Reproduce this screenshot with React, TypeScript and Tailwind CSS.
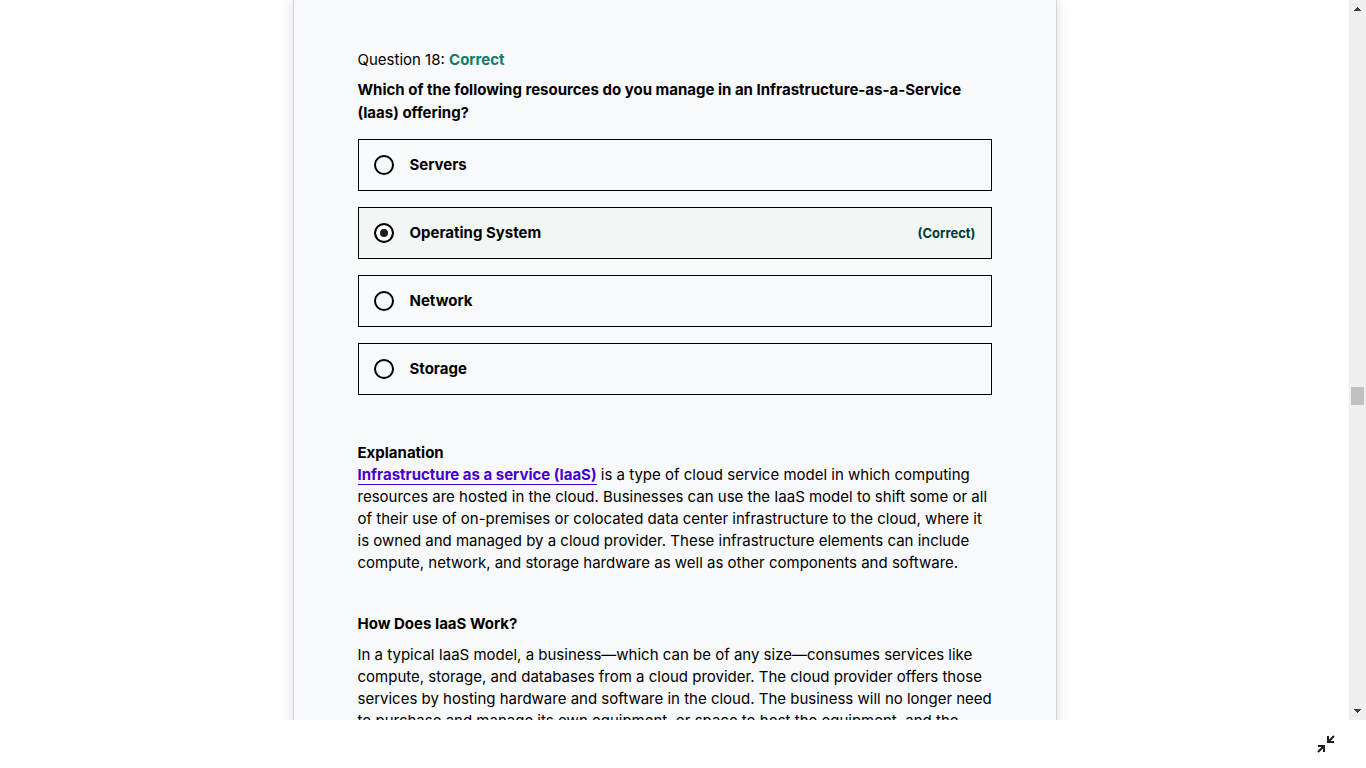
const options = [
  { id: "servers", label: "Servers", correct: false },
  { id: "operating-system", label: "Operating System", correct: true },
  { id: "network", label: "Network", correct: false },
  { id: "storage", label: "Storage", correct: false },
];

function AnswerOption({ id, label, correct }: { id: string; label: string; correct: boolean }) {
  return (
    <label
      htmlFor={id}
      className={`flex items-center gap-4 border border-black px-[15px] py-[13px] leading-6 font-bold ${
        correct ? "bg-[#f2f6f5]" : ""
      }`}
    >
      <input
        id={id}
        type="radio"
        name="answer"
        defaultChecked={correct}
        className="size-5 shrink-0 appearance-none rounded-full border-2 border-black checked:bg-[#1c1d1f] checked:shadow-[inset_0_0_0_4px_#ffffff]"
      />
      <span className="flex-1">{label}</span>
      {correct && <span className="text-[13px] text-[#003c32]">(Correct)</span>}
    </label>
  );
}

function Scrollbar() {
  return (
    <div aria-hidden="true" className="flex w-[17px] shrink-0 flex-col items-center justify-between bg-[#f0f0f0] py-[7px]">
      <svg width="7" height="4" viewBox="0 0 7 4" shapeRendering="crispEdges" fill="#404040">
        <path d="M3 0h1v1h1v1h1v1h1v1H0V3h1V2h1V1h1z" />
      </svg>
      <div className="mt-[72px] h-[18px] w-[13px] bg-[#c1c1c1]" />
      <svg width="7" height="4" viewBox="0 0 7 4" shapeRendering="crispEdges" fill="#404040">
        <path d="M0 0h7v1H6v1H5v1H4v1H3V3H2V2H1V1H0z" />
      </svg>
    </div>
  );
}

export default function App() {
  return (
    <div className="flex h-screen flex-col bg-white font-['Inter','Liberation_Sans',sans-serif] text-[15px] text-black">
      <div className="flex min-h-0 flex-1">
        <main className="flex flex-1 justify-center overflow-hidden">
          <article className="h-max w-full max-w-[764px] border-x border-[#d1d7dc] bg-[#f8f9fb] px-16 pt-12 pb-16 shadow-[0_0_12px_rgba(0,0,0,0.14)]">
            <p className="leading-6">
              Question 18: <span className="font-bold text-[#0f7c6a]">Correct</span>
            </p>
            <h1 className="mt-1.5 leading-[23px] font-bold">
              Which of the following resources do you manage in an Infrastructure-as-a-Service (Iaas) offering?
            </h1>
            <fieldset aria-label="Answers" className="mt-[15px] flex flex-col gap-4">
              {options.map((option) => (
                <AnswerOption key={option.id} {...option} />
              ))}
            </fieldset>

            <h2 className="mt-[47px] leading-[22px] font-bold">Explanation</h2>
            <p className="leading-[22px]">
              <a href="#iaas" className="border-b border-[#4700cc] font-bold text-[#4700cc]">
                Infrastructure as a service (IaaS)
              </a>{" "}
              is a type of cloud service model in which computing resources are hosted in the cloud. Businesses can use
              the IaaS model to shift some or all of their use of on-premises or colocated data center infrastructure to
              the cloud, where it is owned and managed by a cloud provider. These infrastructure elements can include
              compute, network, and storage hardware as well as other components and software.
            </p>

            <h2 className="mt-[39px] leading-[22px] font-bold">How Does IaaS Work?</h2>
            <p className="-mr-2 mt-[9px] leading-[22px]">
              In a typical IaaS model, a business—which can be of any size—consumes services like
              <br />
              compute, storage, and databases from a cloud provider. The cloud provider offers those
              <br />
              services by hosting hardware and software in the cloud. The business will no longer need
              <br />
              to purchase and manage its own equipment, or space to host the equipment, and the
            </p>
          </article>
        </main>
        <Scrollbar />
      </div>
      <footer className="flex h-12 shrink-0 items-center justify-end bg-white px-8">
        <button type="button" aria-label="Exit expanded view" className="flex size-4 items-center justify-center">
          <svg width="18" height="18" viewBox="0 0 18 18" className="shrink-0" fill="none" stroke="#1c1d1f" strokeWidth="2">
            <path d="M17 1l-6 6M11 1v6h6M1 17l6-6M1 11h6v6" />
          </svg>
        </button>
      </footer>
    </div>
  );
}
